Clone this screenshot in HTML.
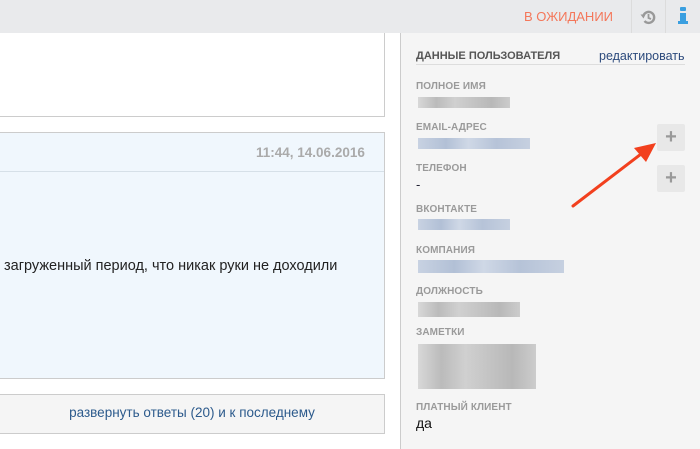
<!DOCTYPE html>
<html><head><meta charset="utf-8"><style>
*{margin:0;padding:0;box-sizing:border-box}
body{width:700px;height:449px;overflow:hidden;background:#fff;font-family:"Liberation Sans",sans-serif;position:relative}
.a{position:absolute}
.lbl{position:absolute;left:416px;font-size:10px;color:#9a9a9a;font-weight:bold;letter-spacing:0.1px}
.blur{position:absolute;height:11px}
.g{background:linear-gradient(90deg,#d8d8d8,#bbb 20%,#d0d0d0 40%,#c4c4c4 60%,#b8b8b8 80%,#ccc)}
.b{background:linear-gradient(90deg,#c8d2e2,#b2c0d6 25%,#cfd8e6 45%,#b6c3d8 70%,#c6d0e0)}
.plus{position:absolute;left:657px;width:28px;height:27px;background:#e8e8e8;border-radius:2px;color:#999;font-size:20px;text-align:center;line-height:26px;font-weight:bold}
</style></head><body>
<div class="a" style="left:0;top:0;width:700px;height:33px;background:#e9eaec"></div>
<div class="a" style="left:524px;top:9px;font-size:13px;color:#f4775a">В ОЖИДАНИИ</div>
<div class="a" style="left:631px;top:0;width:1px;height:33px;background:#dcdcdc"></div>
<div class="a" style="left:665px;top:0;width:1px;height:33px;background:#dcdcdc"></div>
<svg class="a" style="left:639px;top:8px" width="18" height="18" viewBox="0 0 18 18"><path d="M4.5 7.5 A5.5 5.5 0 1 1 5.5 13" fill="none" stroke="#999" stroke-width="2.4"/><path d="M1.5 6.5 L6.5 6.5 L4.5 10.5Z" fill="#999"/><path d="M9.5 6 V10 L12 11" fill="none" stroke="#999" stroke-width="1.8"/></svg>
<div class="a" style="left:680px;top:7px;width:6px;height:4px;background:#3a9fe0;border-radius:1px"></div>
<div class="a" style="left:680px;top:13px;width:6px;height:10px;background:#3a9fe0"></div>
<div class="a" style="left:678px;top:21px;width:10px;height:3px;background:#3a9fe0"></div>

<div class="a" style="left:-2px;top:33px;width:387px;height:84px;border:1px solid #ccc;border-top:none;background:#fff"></div>
<div class="a" style="left:-2px;top:132px;width:387px;height:247px;border:1px solid #ccc;background:#f0f7fd"></div>
<div class="a" style="left:0;top:171px;width:384px;height:1px;background:#d6e0e8"></div>
<div class="a" style="left:256px;top:145px;font-size:13.5px;font-weight:bold;color:#aaa">11:44, 14.06.2016</div>
<div class="a" style="left:4px;top:258px;font-size:14.5px;color:#222">загруженный период, что никак руки не доходили</div>
<div class="a" style="left:-2px;top:394px;width:387px;height:40px;border:1px solid #ccc;background:#f5f5f5"></div>
<div class="a" style="left:0;top:405px;width:384px;text-align:center;font-size:13.5px;color:#2c5a8c">развернуть ответы (20) и к последнему</div>

<div class="a" style="left:400px;top:33px;width:300px;height:416px;background:#f5f5f5;border-left:1px solid #ccc"></div>
<div class="a" style="left:416px;top:50px;font-size:11px;font-weight:bold;color:#555">ДАННЫЕ ПОЛЬЗОВАТЕЛЯ</div>
<div class="a" style="left:599px;top:49px;font-size:12.5px;color:#2c4a7c">редактировать</div>
<div class="a" style="left:416px;top:64px;width:269px;height:1px;background:#ddd"></div>

<div class="lbl" style="top:81px">ПОЛНОЕ ИМЯ</div>
<div class="blur g" style="left:418px;top:97px;width:92px"></div>
<div class="lbl" style="top:122px">EMAIL-АДРЕС</div>
<div class="blur b" style="left:418px;top:138px;width:112px"></div>
<div class="plus" style="top:124px">+</div>
<div class="lbl" style="top:163px">ТЕЛЕФОН</div>
<div class="a" style="left:416px;top:177px;font-size:13px;color:#223">-</div>
<div class="plus" style="top:165px">+</div>
<div class="lbl" style="top:204px">ВКОНТАКТЕ</div>
<div class="blur b" style="left:418px;top:219px;width:92px"></div>
<div class="lbl" style="top:245px">КОМПАНИЯ</div>
<div class="blur b" style="left:418px;top:260px;width:146px;height:13px"></div>
<div class="lbl" style="top:286px">ДОЛЖНОСТЬ</div>
<div class="blur g" style="left:418px;top:302px;width:102px;height:15px"></div>
<div class="lbl" style="top:327px">ЗАМЕТКИ</div>
<div class="blur g" style="left:418px;top:344px;width:118px;height:45px"></div>
<div class="lbl" style="top:402px">ПЛАТНЫЙ КЛИЕНТ</div>
<div class="a" style="left:416px;top:415px;font-size:14px;color:#111">да</div>

<svg class="a" style="left:560px;top:135px" width="110" height="80"><path d="M13 71 L85 16" stroke="#f2401e" stroke-width="3" stroke-linecap="round"/><path d="M96 8 L74 13 L86 27Z" fill="#f2401e"/></svg>
</body></html>
